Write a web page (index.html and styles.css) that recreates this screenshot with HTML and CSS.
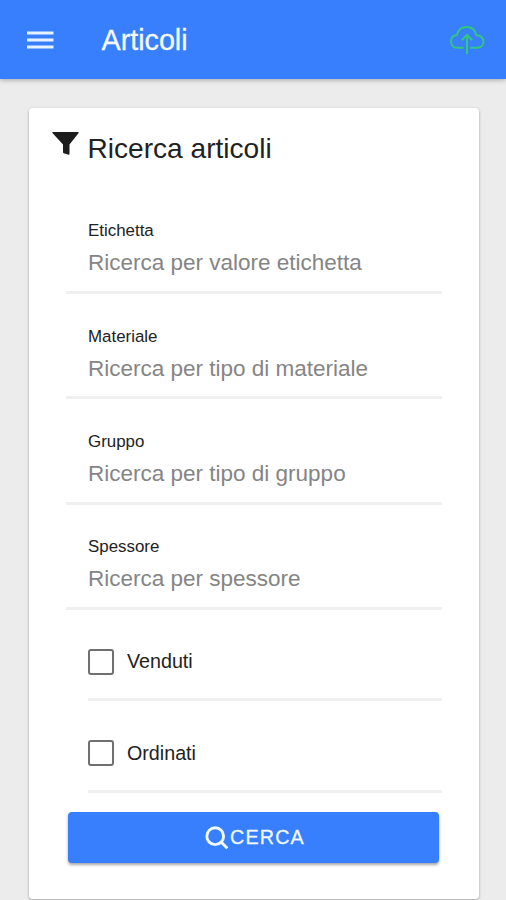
FILE: index.html
```html
<!DOCTYPE html>
<html lang="it">
<head>
<meta charset="utf-8">
<title>Articoli</title>
<link rel="stylesheet" href="styles.css">
</head>
<body>
<header class="toolbar">
  <svg class="menu-icon" viewBox="0 0 27 20" aria-hidden="true"><path d="M0 3h26.500M0 10h26.500M0 17h26.500"/></svg>
  <h1 class="toolbar-title">Articoli</h1>
  <svg class="cloud-icon" viewBox="0 0 36 30" aria-hidden="true"><path d="M14.500 22.800H8.500C4.500 22.800 2 20 2 16.300c0-3.600 2.500-5.900 5.900-6.300C9 4.900 12.800 2 17.700 2c4.900 0 8.500 3 9.600 8.200 4.200.2 7.200 2.600 7.200 6.400 0 3.500-2.600 6.200-6.500 6.200h-6.800M18 29V10M12.800 15.200L18 10l5.200 5.200"/></svg>
</header>
<main class="card">
  <div class="card-header">
    <svg class="filter-icon" viewBox="0 0 27 24" aria-hidden="true"><path d="M1 0h25q1 0 .6 1L17.500 12.500V22q0 .8-.8.8l-5-1.500q-.7-.3-.7-1V12.500L.4 1Q0 0 1 0z"/></svg>
    <h2 class="card-title">Ricerca articoli</h2>
  </div>
  <form class="form">
    <label class="field"><span class="label">Etichetta</span><input class="input" type="text" placeholder="Ricerca per valore etichetta"></label>
    <label class="field"><span class="label">Materiale</span><input class="input" type="text" placeholder="Ricerca per tipo di materiale"></label>
    <label class="field"><span class="label">Gruppo</span><input class="input" type="text" placeholder="Ricerca per tipo di gruppo"></label>
    <label class="field"><span class="label">Spessore</span><input class="input" type="text" placeholder="Ricerca per spessore"></label>
    <label class="check"><input class="box" type="checkbox"><span>Venduti</span></label>
    <label class="check"><input class="box" type="checkbox"><span>Ordinati</span></label>
    <button class="search" type="button">
      <svg class="search-icon" viewBox="0 0 24 24" aria-hidden="true"><circle cx="10.200" cy="10.200" r="8.400"/><path d="M16.300 16.300l6 6"/></svg>
      <span>CERCA</span>
    </button>
  </form>
</main>
</body>
</html>
```
FILE: styles.css
```css
* {
  box-sizing: border-box;
}

body {
  margin: 0;
  height: 900px;
  overflow: hidden;
  background: #ececec;
  color: #222;
  font-family: "Liberation Sans", Arial, sans-serif;
}

h1,
h2 {
  margin: 0;
  font-weight: 400;
}

.toolbar {
  display: flex;
  align-items: center;
  height: 79px;
  padding: 0 21px 0 27px;
  background: #387ffe;
  box-shadow: 0 1px 5px rgba(0, 0, 0, 0.3);
}

.menu-icon {
  width: 27px;
  height: 20px;
  fill: none;
  stroke: #e6f2ff;
  stroke-width: 3;
}

.toolbar-title {
  margin-left: 47.500px;
  color: #f3f9ff;
  font-size: 28.700px;
  line-height: 36px;
  -webkit-text-stroke: 0.300px #f3f9ff;
}

.cloud-icon {
  width: 36px;
  height: 30px;
  margin-left: auto;
  fill: none;
  stroke: #32c77d;
  stroke-width: 2;
}

.card {
  height: 791.500px;
  margin: 28.500px 27px 0 28.500px;
  border-radius: 4px;
  background: #fff;
  box-shadow: 0 1px 3px rgba(0, 0, 0, 0.32);
}

.card-header {
  display: flex;
  height: 81px;
  padding: 24.500px 0 0 23.500px;
}

.filter-icon {
  width: 27px;
  height: 24px;
  fill: #1d1d1d;
}

.card-title {
  margin-left: 8.500px;
  padding-top: 1px;
  font-size: 28.100px;
  line-height: 32px;
}

.form {
  padding: 0 37.500px;
}

.field {
  display: flex;
  flex-direction: column;
  height: 105.400px;
  padding: 32.800px 0 0 22px;
  border-bottom: 3px solid #f0f0f0;
}

.label {
  font-size: 16.900px;
  line-height: 20px;
}

.input {
  height: 32px;
  margin-top: 6px;
  padding: 0;
  border: 0;
  outline: 0;
  background: transparent;
  font: 22.500px "Liberation Sans", Arial, sans-serif;
}

.input::placeholder {
  color: #858585;
  opacity: 1;
}

.check {
  display: flex;
  align-items: center;
  height: 91.400px;
  margin-left: 22px;
  padding-top: 15px;
  border-bottom: 3px solid #f0f0f0;
  font-size: 19.700px;
}

.box {
  appearance: none;
  width: 26px;
  height: 26px;
  margin: 0 13.500px 0 -0.500px;
  border: 2px solid #707070;
  border-radius: 3px;
}

.search {
  display: flex;
  align-items: center;
  justify-content: center;
  width: 371px;
  height: 51px;
  margin: 19.500px 0 0 2px;
  padding: 0 0 0 3px;
  border: 0;
  border-radius: 4px;
  background: #387ffe;
  box-shadow: 0 2px 3px rgba(0, 0, 0, 0.35);
  color: #f0f7ff;
  font: 19.700px "Liberation Sans", Arial, sans-serif;
  letter-spacing: 1.200px;
  -webkit-text-stroke: 0.300px #f0f7ff;
}

.search-icon {
  width: 24px;
  height: 24px;
  margin-right: 1px;
  fill: none;
  stroke: #f0f7ff;
  stroke-width: 2.900;
}
```
